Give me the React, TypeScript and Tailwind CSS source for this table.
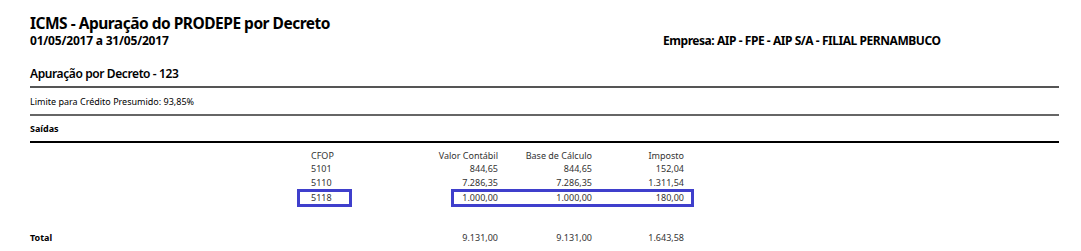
const rows = [
  { cfop: "5101", valor: "844,65", base: "844,65", imposto: "152,04", mark: false },
  { cfop: "5110", valor: "7.286,35", base: "7.286,35", imposto: "1.311,54", mark: false },
  { cfop: "5118", valor: "1.000,00", base: "1.000,00", imposto: "180,00", mark: true },
];

const body = { fontFamily: '"Noto Sans", "Open Sans", sans-serif' };

function Cells({ valor, base, imposto }: { valor: string; base: string; imposto: string }) {
  return (
    <>
      <span className="w-[44px] flex justify-end whitespace-nowrap">{valor}</span>
      <span className="w-[94px] flex justify-end whitespace-nowrap">{base}</span>
      <span className="w-[92px] flex justify-end whitespace-nowrap">{imposto}</span>
    </>
  );
}

export default function App() {
  return (
    <div className="w-[1081px] h-[251px] bg-white text-black pl-[30px] pt-[13px] overflow-hidden" style={body}>
      {/* Cabeçalho */}
      <h1 className="text-[15.5px] font-bold leading-[20px] tracking-[-0.5px] whitespace-nowrap">
        ICMS - Apuração do PRODEPE por Decreto
      </h1>
      <div className="flex items-center h-[16px] text-[12px] font-bold leading-[16px] whitespace-nowrap">
        <span className="w-[633px] tracking-[-0.2px]">01/05/2017 a 31/05/2017</span>
        <span className="tracking-[-0.45px]">Empresa: AIP - FPE - AIP S/A - FILIAL PERNAMBUCO</span>
      </div>

      <div className="mt-[17px] text-[12px] font-semibold leading-[16px] tracking-[-0.4px]">
        Apuração por Decreto - 123
      </div>

      <div className="w-[1029px] mt-[4px] border-t-2 border-[#555]" />
      <div className="w-[1029px] h-[26px] flex items-center text-[9px] leading-none">
        Limite para Crédito Presumido: 93,85%
      </div>
      <div className="w-[1029px] border-t-2 border-[#666]" />
      <div className="w-[1029px] h-[25px] flex items-center text-[9px] font-bold leading-none">Saídas</div>
      <div className="w-[1029px] border-t-2 border-black" />

      {/* Tabela */}
      <div className="mt-[5px] text-[9px] leading-none text-[#333]">
        <div className="flex h-[14px] items-center">
          <span className="ml-[267px] w-[55px] pl-[14px]">CFOP</span>
          <div className="ml-[99px] flex w-[243px] pl-[3px] pr-[10px]">
            <Cells valor="Valor Contábil" base="Base de Cálculo" imposto="Imposto" />
          </div>
        </div>
        {rows.map((r) => (
          <div key={r.cfop} className={r.mark ? "flex h-[18px] -mt-px" : "flex h-[14px]"}>
            <span
              className={`ml-[267px] w-[55px] pl-[11px] flex items-center pb-[2px] border-[3px] ${
                r.mark ? "border-[#3f3fcc]" : "border-transparent"
              }`}
            >
              {r.cfop}
            </span>
            <div
              className={`ml-[99px] flex w-[243px] items-center pb-[2px] pr-[7px] border-[3px] ${
                r.mark ? "border-[#3f3fcc]" : "border-transparent"
              }`}
            >
              <Cells valor={r.valor} base={r.base} imposto={r.imposto} />
            </div>
          </div>
        ))}

        <div className="flex h-[14px] items-center mt-[23px]">
          <span className="w-[321px] font-bold text-black">Total</span>
          <div className="ml-[100px] flex w-[243px] pl-[3px] pr-[10px]">
            <Cells valor="9.131,00" base="9.131,00" imposto="1.643,58" />
          </div>
        </div>
      </div>
    </div>
  );
}
